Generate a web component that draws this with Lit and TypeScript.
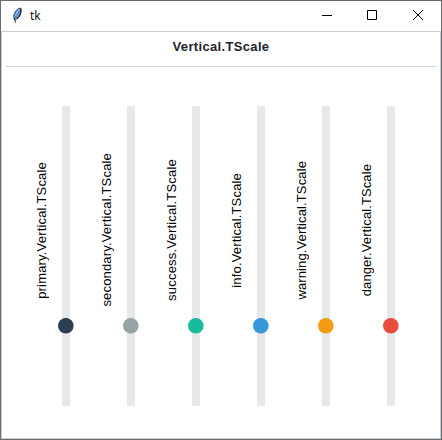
import { LitElement, html, css, svg } from "lit";
import { customElement, property } from "lit/decorators.js";
import { styleMap } from "lit/directives/style-map.js";

@customElement("scale-column")
class ScaleColumn extends LitElement {
  @property() label = "";
  @property() color = "";
  @property({ type: Number }) spacing = 0;

  static styles = css`
    :host { display: flex; width: 65px; height: 300px; align-items: center; }
    .label {
      box-sizing: border-box;
      width: 16px;
      margin-bottom: 52px;
      writing-mode: vertical-rl;
      transform: rotate(180deg);
      white-space: nowrap;
      font: 13px/16px "Liberation Sans", sans-serif;
      color: #000;
    }
    .track {
      width: 8px;
      height: 300px;
      margin-left: 12px;
      background: #e7e8ea;
      display: flex;
      justify-content: center;
    }
    .thumb { width: 16px; height: 16px; flex: none; margin-top: 212px; }
  `;

  render() {
    return html`
      <span class="label" style=${styleMap({ letterSpacing: `${this.spacing}px` })}>${this.label}</span>
      <div class="track">
        <svg class="thumb" viewBox="0 0 16 16"><circle cx="7.8" cy="7.75" r="7.8" fill=${this.color}></circle></svg>
      </div>
    `;
  }
}

@customElement("app-root")
class AppRoot extends LitElement {
  static styles = css`
    :host {
      display: flex;
      flex-direction: column;
      box-sizing: border-box;
      width: 442px;
      height: 440px;
      border: 1px solid #6b6c70;
      background: #fff;
      font-family: "Open Sans", sans-serif;
    }
    .titlebar { display: flex; height: 30px; flex: none; }
    .feather { width: 10px; height: 16px; margin: 6px 0 0 11px; }
    .name { font: 12px/16px "Open Sans", sans-serif; margin: 7px 0 0 8px; color: #000; }
    .buttons { display: flex; margin-left: auto; }
    .button { width: 45px; height: 30px; flex: none; }
    .button:last-child { width: 46px; }
    .client {
      flex: 1;
      display: flex;
      flex-direction: column;
      border: 1px solid #cbd0d8;
    }
    .heading {
      height: 35px;
      box-sizing: border-box;
      padding-top: 6px;
      margin: 0 4px;
      border-bottom: 1px solid #ced4dc;
      text-align: center;
      font: bold 13px/18px "Liberation Sans", sans-serif;
      letter-spacing: 0.34px;
      color: #212529;
    }
    .scales { display: flex; margin: 39px 0 0 32px; }
  `;

  private scales = [
    { style: "primary", color: "#2c3e50", spacing: 0.18 },
    { style: "secondary", color: "#95a5a6", spacing: 0.17 },
    { style: "success", color: "#18bc9c", spacing: 0.2 },
    { style: "info", color: "#3498db", spacing: 0.17 },
    { style: "warning", color: "#f39c12", spacing: 0.12 },
    { style: "danger", color: "#e74c3c", spacing: 0.1 },
  ];

  private feather() {
    return svg`
      <path d="M7.6 .5 9.3 1.6 9.1 6 7.8 9 5.6 12 3 13 1.4 11.5 1.3 8 3 4.6 5.5 1.8Z" fill="#44505f"></path>
      <path d="M7.6 1.4 8.4 3.3 7.8 7 5.8 10.6 3.2 11.9 2.1 10 2.8 7 4.5 4Z" fill="#5594d8"></path>
      <path d="M7.2 2 5.5 4.2 3.3 8.5" stroke="#a9cdec" stroke-width="1" fill="none"></path>
      <path d="M9 1.5V5.5L7.5 9.3 5.2 11.8M2.5 11.5 3.5 15.5" stroke="#101216" stroke-width="1" fill="none"></path>`;
  }

  render() {
    return html`
      <div class="titlebar">
        <svg class="feather" viewBox="0 0 10 16">${this.feather()}</svg>
        <span class="name">tk</span>
        <div class="buttons">
          <svg class="button"><path d="M17 14.5h10" stroke="#000"></path></svg>
          <svg class="button"><path d="M17.5 9.5h9v9h-9z" stroke="#000" fill="none"></path></svg>
          <svg class="button"><path d="M18 9l10 10M28 9l-10 10" stroke="#000"></path></svg>
        </div>
      </div>
      <div class="client">
        <div class="heading">Vertical.TScale</div>
        <div class="scales">
          ${this.scales.map((s) => html`
            <scale-column .label=${`${s.style}.Vertical.TScale`} .color=${s.color} .spacing=${s.spacing}></scale-column>
          `)}
        </div>
      </div>
    `;
  }
}
